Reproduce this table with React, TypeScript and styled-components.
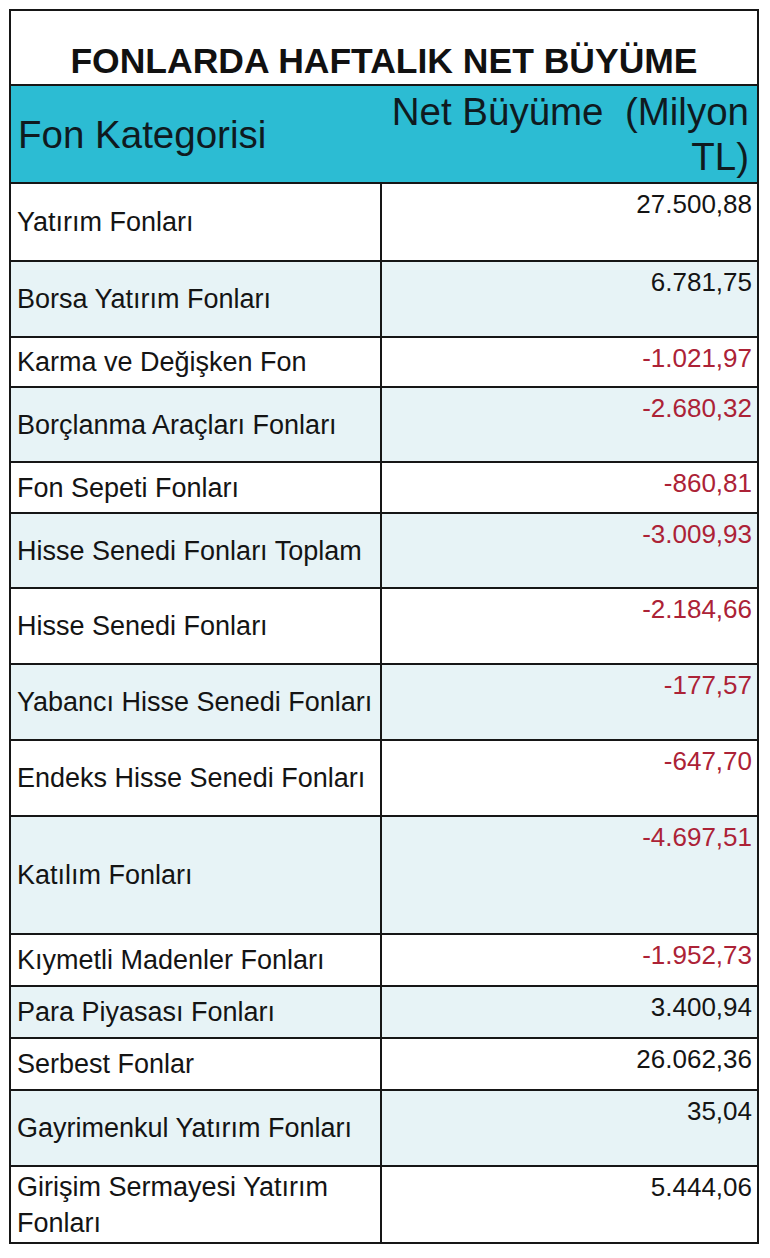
import React from 'react';
import styled, { createGlobalStyle } from 'styled-components';

interface FundRow {
  name: string;
  value: string;
  height: number;
  shaded: boolean;
}

const rows: FundRow[] = [
  { name: 'Yatırım Fonları', value: '27.500,88', height: 78, shaded: false },
  { name: 'Borsa Yatırım Fonları', value: '6.781,75', height: 76, shaded: true },
  { name: 'Karma ve Değişken Fon', value: '-1.021,97', height: 50, shaded: false },
  { name: 'Borçlanma Araçları Fonları', value: '-2.680,32', height: 75, shaded: true },
  { name: 'Fon Sepeti Fonları', value: '-860,81', height: 51, shaded: false },
  { name: 'Hisse Senedi Fonları Toplam', value: '-3.009,93', height: 75, shaded: true },
  { name: 'Hisse Senedi Fonları', value: '-2.184,66', height: 76, shaded: false },
  { name: 'Yabancı Hisse Senedi Fonları', value: '-177,57', height: 76, shaded: true },
  { name: 'Endeks Hisse Senedi Fonları', value: '-647,70', height: 76, shaded: false },
  { name: 'Katılım Fonları', value: '-4.697,51', height: 118, shaded: true },
  { name: 'Kıymetli Madenler Fonları', value: '-1.952,73', height: 52, shaded: false },
  { name: 'Para Piyasası Fonları', value: '3.400,94', height: 52, shaded: true },
  { name: 'Serbest Fonlar', value: '26.062,36', height: 52, shaded: false },
  { name: 'Gayrimenkul Yatırım Fonları', value: '35,04', height: 76, shaded: true },
  { name: 'Girişim Sermayesi Yatırım Fonları', value: '5.444,06', height: 75, shaded: false },
];

const GlobalStyle = createGlobalStyle`
  html, body {
    margin: 0;
    padding: 0;
    background: #fff;
  }
  body {
    font-family: "Liberation Sans", Arial, sans-serif;
    color: #151515;
  }
`

const Page = styled.div`
  padding: 9px 0 0 9px;
`

const Table = styled.div`
  width: 750px;
  box-sizing: border-box;
  border: 2px solid #161616;
  display: flex;
  flex-direction: column;
`

const TitleRow = styled.div`
  height: 75px;
  box-sizing: border-box;
  border-bottom: 2px solid #161616;
  display: flex;
  align-items: flex-end;
  justify-content: center;
  padding-bottom: 2px;
  font-size: 35.5px;
  font-weight: 700;
  color: #111;
`

const HeaderRow = styled.div`
  height: 98px;
  box-sizing: border-box;
  border-bottom: 2px solid #161616;
  background: #2cbcd3;
  display: grid;
  grid-template-columns: 371px 1fr;
  font-size: 38.5px;
  color: #0f1a1f;
`

const HeaderCell = styled.div<{ right?: boolean }>`
  display: flex;
  align-items: center;
  justify-content: ${(props) => (props.right ? 'flex-end' : 'flex-start')};
  text-align: ${(props) => (props.right ? 'right' : 'left')};
  padding: ${(props) => (props.right ? '0 8px 0 0' : '0 0 0 7px')};
  line-height: 45px;
  white-space: pre;
`

const Row = styled.div<{ shaded: boolean; last: boolean }>`
  box-sizing: border-box;
  display: grid;
  grid-template-columns: 371px 1fr;
  background: ${(props) => (props.shaded ? '#e7f3f6' : '#fff')};
  border-bottom: ${(props) => (props.last ? 'none' : '2px solid #161616')};
`

const NameCell = styled.div`
  border-right: 2px solid #161616;
  display: flex;
  align-items: center;
  padding-left: 6px;
  padding-right: 2px;
  font-size: 27px;
  line-height: 36px;
  color: #141414;
`

const ValueCell = styled.div<{ negative: boolean }>`
  text-align: right;
  padding: 5px 5px 0 0;
  font-size: 26px;
  line-height: 30px;
  color: ${(props) => (props.negative ? '#ac2236' : '#141414')};
`

const App: React.FC = () => {
  return (
    <Page>
      <GlobalStyle />
      <Table>
        <TitleRow>FONLARDA HAFTALIK NET BÜYÜME</TitleRow>
        <HeaderRow>
          <HeaderCell>Fon Kategorisi</HeaderCell>
          <HeaderCell right>{'Net Büyüme  (Milyon\nTL)'}</HeaderCell>
        </HeaderRow>
        {rows.map((row, i) => (
          <Row
            key={row.name}
            shaded={row.shaded}
            last={i === rows.length - 1}
            style={{ height: row.height }}
          >
            <NameCell>{row.name}</NameCell>
            <ValueCell negative={row.value.startsWith('-')}>{row.value}</ValueCell>
          </Row>
        ))}
      </Table>
    </Page>
  );
};

export default App;
